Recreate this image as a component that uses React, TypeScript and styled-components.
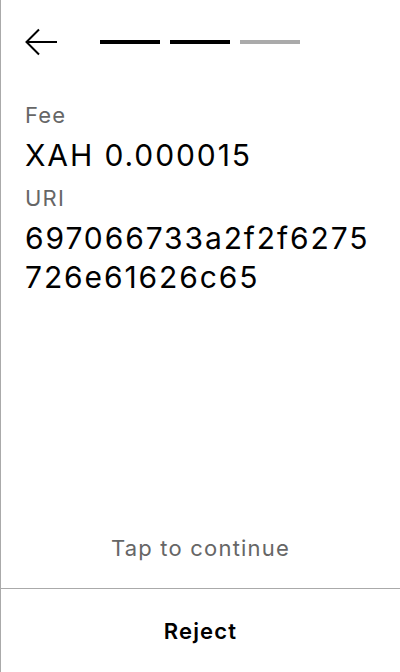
import React from "react";
import styled, { createGlobalStyle } from "styled-components";

const Global = createGlobalStyle`
  html, body { margin: 0; padding: 0; background: #fff; }
  body { font-family: Inter, "Noto Sans", sans-serif; color: #000; }
`;

const Screen = styled.div`
  box-sizing: border-box;
  height: 672px;
  width: 400px;
  border-left: 1px solid #aaa;
  display: flex;
  flex-direction: column;
`;

const Header = styled.div`
  display: flex;
  align-items: center;
  height: 86px;
  padding-left: 24px;
`;

const BackButton = styled.button`
  border: none;
  background: none;
  padding: 0;
  margin: 0;
  width: 33px;
  height: 30px;
  display: flex;
  align-items: center;
  justify-content: center;
  cursor: pointer;
`;

const Steps = styled.div`
  display: flex;
  gap: 10px;
  margin-left: 42px;
  margin-bottom: 2px;
`;

const Step = styled.div<{ $active: boolean }>`
  width: 60px;
  height: 4px;
  background: ${(p) => (p.$active ? "#000" : "#aaa")};
`;

const Content = styled.div`
  flex: 1;
  padding: 14px 24px 0 24px;
  display: flex;
  flex-direction: column;
`;

const Label = styled.div`
  font-size: 22px;
  line-height: 30px;
  letter-spacing: 1.2px;
  color: #666;
  margin-bottom: 6px;
`;

const Value = styled.div`
  font-size: 30px;
  line-height: 39px;
  letter-spacing: 1.9px;
  color: #000;
  margin-bottom: 8px;
  word-break: break-all;
`;

const Hint = styled.div`
  text-align: center;
  font-size: 22px;
  line-height: 28px;
  letter-spacing: 1.2px;
  color: #666;
  padding-bottom: 26px;
`;

const Footer = styled.button`
  border: none;
  border-top: 1px solid #aaa;
  background: none;
  height: 84px;
  width: 100%;
  font-family: Inter, "Noto Sans", sans-serif;
  font-size: 22px;
  font-weight: 600;
  letter-spacing: 1.2px;
  color: #000;
  padding: 0;
  cursor: pointer;
`;

const steps = [true, true, false];

export default function App() {
  return (
    <>
      <Global />
      <Screen>
        <Header>
          <BackButton aria-label="Back">
            <svg width="33" height="30" viewBox="0 0 33 30" fill="none">
              <path d="M32 14H2" stroke="#000" strokeWidth="2" />
              <path d="M14 1.5L1.5 14L14 26.5" stroke="#000" strokeWidth="2" />
            </svg>
          </BackButton>
          <Steps>
            {steps.map((a, i) => (
              <Step key={i} $active={a} />
            ))}
          </Steps>
        </Header>
        <Content>
          <Label>Fee</Label>
          <Value>XAH 0.000015</Value>
          <Label>URI</Label>
          <Value>697066733a2f2f6275726e61626c65</Value>
        </Content>
        <Hint>Tap to continue</Hint>
        <Footer>Reject</Footer>
      </Screen>
    </>
  );
}
